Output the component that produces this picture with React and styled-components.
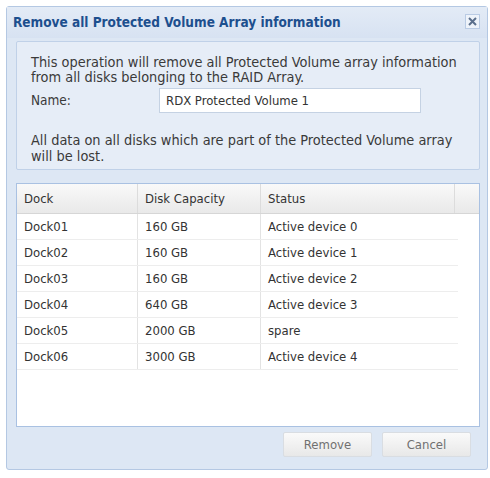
import React from "react";
import styled, { createGlobalStyle } from "styled-components";

const GlobalStyle = createGlobalStyle`
  html, body {
    margin: 0;
    padding: 0;
    background: #ffffff;
  }
  body {
    font-family: "DejaVu Sans Condensed", "DejaVu Sans", sans-serif;
  }
`;

const rows = [
  { dock: "Dock01", capacity: "160 GB", status: "Active device 0" },
  { dock: "Dock02", capacity: "160 GB", status: "Active device 1" },
  { dock: "Dock03", capacity: "160 GB", status: "Active device 2" },
  { dock: "Dock04", capacity: "640 GB", status: "Active device 3" },
  { dock: "Dock05", capacity: "2000 GB", status: "spare" },
  { dock: "Dock06", capacity: "3000 GB", status: "Active device 4" },
];

const Page = styled.div`
  padding: 6px 2px 0 6px;
`;

const Window = styled.div`
  width: 482px;
  height: 464px;
  box-sizing: border-box;
  border: 1px solid #b4c8e3;
  border-radius: 3px;
  background: #dde7f4;
  display: flex;
  flex-direction: column;
`;

const TitleBar = styled.div`
  height: 31px;
  display: flex;
  align-items: center;
  justify-content: space-between;
  padding: 0 7px 2px 6px;
  box-sizing: border-box;
  background: linear-gradient(#e3ebf6, #d7e2f2);
`;

const Title = styled.div`
  font-weight: bold;
  font-size: 13.5px;
  color: #1d4f8e;
`;

const CloseBox = styled.div`
  width: 15px;
  height: 15px;
  box-sizing: border-box;
  border: 1px solid #b9cbe4;
  background: #eef3fa;
  display: flex;
  align-items: center;
  justify-content: center;
`;

const Body = styled.div`
  flex: 1;
  display: flex;
  flex-direction: column;
  padding: 3px 7px 0 9px;
`;

const InfoPanel = styled.div`
  height: 129px;
  box-sizing: border-box;
  border: 1px solid #c0d1e8;
  border-radius: 2px;
  background: #e6edf7;
  padding: 13px 6px 0 14px;
  font-size: 14.4px;
  color: #3a3a3a;
  line-height: 15px;
`;

const Paragraph = styled.p`
  margin: ${(p) => p.$top || 0}px 0 0 0;
  line-height: ${(p) => p.$lh || 15}px;
  white-space: nowrap;
`;

const NameRow = styled.div`
  display: flex;
  align-items: center;
  margin-top: 3px;
  font-size: 13.5px;
`;

const Label = styled.div`
  width: 128px;
`;

const NameInput = styled.div`
  width: 262px;
  height: 25px;
  box-sizing: border-box;
  border: 1px solid #c5d2e3;
  background: #ffffff;
  display: flex;
  align-items: center;
  padding-left: 6px;
  font-size: 13px;
  color: #333;
`;

const Grid = styled.div`
  margin-top: 13px;
  height: 244px;
  box-sizing: border-box;
  border: 1px solid #a9c1e2;
  background: #ffffff;
  font-size: 13px;
  color: #333;
`;

const columns = "121px 123px 194px 1fr";

const HeaderRow = styled.div`
  display: grid;
  grid-template-columns: ${columns};
  height: 30px;
  box-sizing: border-box;
  background: linear-gradient(#f9f9f9, #e9e9e9);
  border-bottom: 1px solid #d6d6d6;
`;

const HeaderCell = styled.div`
  display: flex;
  align-items: center;
  padding-left: 7px;
  border-right: 1px solid #dcdcdc;
  &:last-child {
    border-right: none;
  }
`;

const DataRow = styled.div`
  display: grid;
  grid-template-columns: ${columns};
  height: 26px;
  box-sizing: border-box;
  border-bottom: 1px solid #ededed;
  margin-right: 21px;
`;

const Cell = styled.div`
  display: flex;
  align-items: center;
  padding-left: 7px;
  border-right: 1px solid #e3e3e3;
  &:last-child {
    border-right: none;
  }
`;

const Footer = styled.div`
  display: flex;
  justify-content: flex-end;
  gap: 10px;
  padding: 5px 9px 0 0;
`;

const Button = styled.div`
  width: 89px;
  height: 25px;
  box-sizing: border-box;
  border: 1px solid #d9dde2;
  border-radius: 2px;
  background: linear-gradient(#fafafa, #e8e8e8);
  display: flex;
  align-items: center;
  justify-content: center;
  font-size: 13px;
  color: #707070;
`;

export default function App() {
  return (
    <Page>
      <GlobalStyle />
      <Window>
        <TitleBar>
          <Title>Remove all Protected Volume Array information</Title>
          <CloseBox>
            <svg width="9" height="9" viewBox="0 0 9 9">
              <path d="M1 1 L8 8 M8 1 L1 8" stroke="#5b6f8c" strokeWidth="2" />
            </svg>
          </CloseBox>
        </TitleBar>
        <Body>
          <InfoPanel>
            <Paragraph>
              This operation will remove all Protected Volume array information
              <br />
              from all disks belonging to the RAID Array.
            </Paragraph>
            <NameRow>
              <Label>Name:</Label>
              <NameInput>RDX Protected Volume 1</NameInput>
            </NameRow>
            <Paragraph $top={19} $lh={16}>
              All data on all disks which are part of the Protected Volume array
              <br />
              will be lost.
            </Paragraph>
          </InfoPanel>
          <Grid>
            <HeaderRow>
              <HeaderCell>Dock</HeaderCell>
              <HeaderCell>Disk Capacity</HeaderCell>
              <HeaderCell>Status</HeaderCell>
              <HeaderCell />
            </HeaderRow>
            {rows.map((r) => (
              <DataRow key={r.dock}>
                <Cell>{r.dock}</Cell>
                <Cell>{r.capacity}</Cell>
                <Cell>{r.status}</Cell>
              </DataRow>
            ))}
          </Grid>
          <Footer>
            <Button>Remove</Button>
            <Button>Cancel</Button>
          </Footer>
        </Body>
      </Window>
    </Page>
  );
}
